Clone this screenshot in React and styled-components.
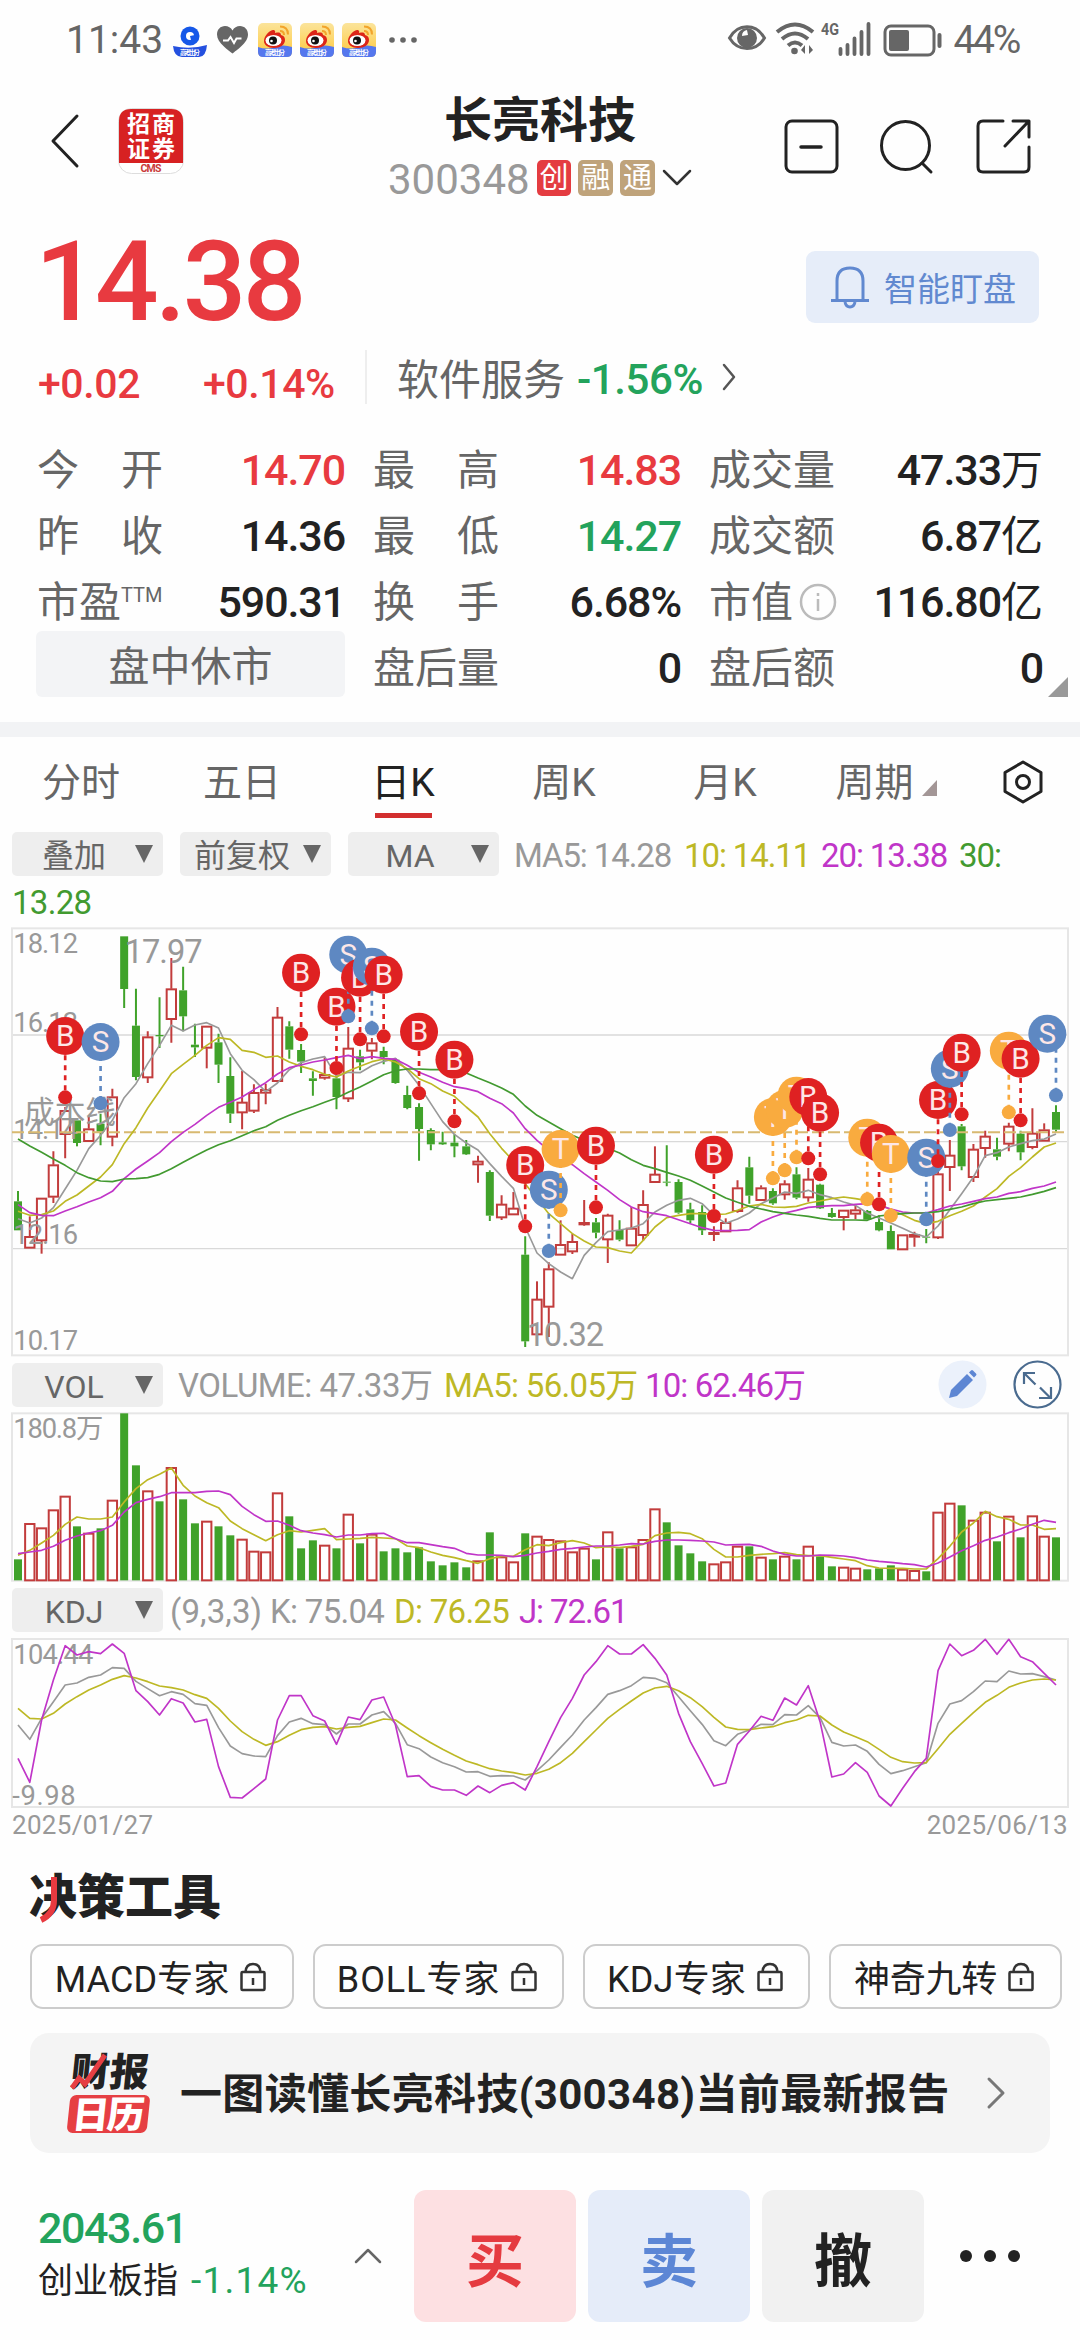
import React from 'react';
import styled, { createGlobalStyle } from 'styled-components';

const GlobalStyle = createGlobalStyle`
    * {
        box-sizing: border-box;
    }
    body {
        margin: 0;
        background: #fefefe;
        font-family: Roboto, "Noto Sans CJK SC", sans-serif;
        color: #222;
    }
    svg {
        display: block;
        flex: none;
        overflow: visible;
    }
`;

const colors = {
    red: '#e83a40',
    green: '#23a35c',
    dark: '#222222',
    gray: '#999999',
    yellow: '#bdb825',
    magenta: '#c035c8',
    maGreen: '#429a30',
    up: '#c23c3c',
    down: '#40a22a',
};

const Page = styled.main`
    width: 1080px;
    height: 2340px;
    overflow: hidden;
    background: #fefefe;
`;

/* status bar */
const StatusBar = styled.header`
    display: flex;
    align-items: center;
    justify-content: space-between;
    height: 80px;
    padding: 0 61px 0 66px;
    color: #666;
`;
const StatusGroup = styled.div`
    display: flex;
    align-items: center;
    gap: ${p => p.$gap}px;
`;
const StatusText = styled.span`
    font-size: 39px;
    line-height: 50px;
    letter-spacing: ${p => p.$spacing || 0}px;
`;

/* title bar */
const TitleBar = styled.nav`
    display: grid;
    grid-template-columns: 388px 304px 1fr;
    height: 134px;
`;
const TitleLeft = styled.div`
    display: flex;
    align-items: center;
    gap: 36px;
    padding: 0 0 13px 50px;
`;
const TitleCenter = styled.div`
    display: flex;
    flex-direction: column;
    align-items: center;
    padding-top: 14px;
`;
const StockName = styled.h1`
    margin: 0;
    font-size: 48px;
    line-height: 54px;
    font-weight: 700;
`;
const CodeRow = styled.div`
    display: flex;
    align-items: center;
    gap: 7px;
    height: 60px;
    width: 100%;
`;
const Code = styled.span`
    width: 142px;
    font-size: 42px;
    line-height: 60px;
    padding-top: 4px;
    color: #999;
`;
const Tag = styled.span`
    width: 36px;
    height: 36px;
    border-radius: 5px;
    background: ${p => p.$bg};
    color: white;
    font-size: 29px;
    line-height: 37px;
    text-align: center;
`;
const TitleRight = styled.div`
    display: flex;
    align-items: center;
    justify-content: flex-end;
    padding-right: 50px;
`;

/* quote */
const PriceRow = styled.section`
    display: flex;
    justify-content: space-between;
    height: 130px;
    padding: 0 41px 0 35px;
`;
const Price = styled.div`
    padding-top: 2px;
    font-size: 112px;
    font-weight: 500;
    line-height: 132px;
    letter-spacing: -3.6px;
    color: ${colors.red};
`;
const WatchButton = styled.button`
    display: flex;
    align-items: center;
    gap: 14px;
    width: 233px;
    height: 72px;
    margin-top: 37px;
    padding: 0 0 0 24px;
    border: none;
    border-radius: 9px;
    background: #e6edf9;
    color: #6189d0;
    font-family: inherit;
    font-size: 33px;
`;
const ChangeRow = styled.section`
    display: flex;
    align-items: center;
    height: 66px;
    padding-left: 38px;
    font-size: 42px;
    line-height: 66px;
`;
const Change = styled.span`
    width: ${p => p.$width}px;
    padding-top: 14px;
    font-weight: 500;
    font-size: 41px;
    letter-spacing: -0.4px;
    color: ${colors.red};
`;
const Divider = styled.i`
    width: 2px;
    height: 54px;
    margin-right: 30px;
    background: #eee;
`;
const Sector = styled.span`
    color: #666;
    padding-top: 7px;
    width: 180px;
`;
const SectorChange = styled.span`
    width: 145px;
    padding-top: 5px;
    font-weight: 500;
    letter-spacing: -0.4px;
    color: ${colors.green};
`;
const QuoteGrid = styled.section`
    position: relative;
    display: grid;
    grid-template-columns: 308px 308px 334px;
    grid-auto-rows: 66px;
    column-gap: 28px;
    margin-top: 27px;
    padding-left: 37px;
    height: 285px;
`;
const QuoteCell = styled.div`
    display: flex;
    justify-content: space-between;
    line-height: 68px;
`;
const QuoteLabel = styled.span`
    display: flex;
    justify-content: space-between;
    width: 126px;
    font-size: 42px;
    color: #666;
    white-space: nowrap;
`;
const Sup = styled.small`
    font-size: 20px;
    line-height: 52px;
    margin-right: 8px;
`;
const QuoteValue = styled.span`
    font-size: 43px;
    font-weight: 500;
    line-height: 66px;
    letter-spacing: -1.1px;
    white-space: nowrap;
    color: ${p => colors[p.$tone] || colors.dark};
`;
const Unit = styled.span`
    font-size: 42px;
    font-weight: 400;
    letter-spacing: 0;
`;
const SessionState = styled.div`
    height: 66px;
    margin: -4px 0 0 -1px;
    border-radius: 6px;
    background: #f3f4f6;
    color: #666;
    font-size: 41px;
    line-height: 72px;
    text-align: center;
`;
const CornerMark = styled.i`
    position: absolute;
    right: 12px;
    top: 240px;
    border-left: 20px solid transparent;
    border-bottom: 20px solid #999;
`;
const Band = styled.div`
    height: 15px;
    background: #f2f3f5;
`;

/* period tabs */
const Tabs = styled.nav`
    display: flex;
    align-items: center;
    height: 95px;
`;
const Tab = styled.span`
    position: relative;
    width: 161px;
    padding: 0 0 3px 1px;
    text-align: center;
    font-size: 39px;
    line-height: 92px;
    color: ${p => (p.$active ? '#222' : '#666')};

    &::after {
        content: '';
        display: ${p => (p.$active ? 'block' : 'none')};
        position: absolute;
        left: 53px;
        bottom: 14px;
        width: 57px;
        height: 5px;
        background: #d22f2f;
    }
`;
const PeriodMark = styled.i`
    display: inline-block;
    margin-left: 8px;
    border-left: 15px solid transparent;
    border-bottom: 16px solid #a39696;
`;
const TabIcon = styled.div`
    margin: 0 0 6px 36px;
`;

/* indicator bars */
const IndicatorBar = styled.div`
    display: flex;
    align-items: center;
    height: ${p => p.$height}px;
    padding-left: ${p => p.$left || 12}px;
`;
const Picker = styled.div`
    display: flex;
    align-items: center;
    width: 151px;
    height: 44px;
    margin-right: 17px;
    border-radius: 5px;
    background: #eee;
    color: #666;
    font-size: 32px;
    line-height: 44px;
`;
const PickerText = styled.span`
    width: 124px;
    padding-top: 4px;
    text-align: center;
    white-space: nowrap;
`;
const PickerArrow = styled.i`
    margin-left: -1px;
    border: 9px solid transparent;
    border-top: 18px solid #666;
    border-bottom: none;
`;
const Metric = styled.span`
    width: ${p => p.$width}px;
    margin-left: ${p => p.$shift || 0}px;
    padding-top: 3px;
    font-size: 33px;
    line-height: 44px;
    letter-spacing: ${p => p.$spacing || -0.7}px;
    white-space: nowrap;
    color: ${p => p.$color};
`;
const ToolIcons = styled.div`
    display: flex;
    gap: 26px;
    margin: 0 18px 0 auto;
`;
const ChartBox = styled.div`
    margin: 0 11px;
    height: ${p => p.$height}px;

    text {
        font-family: Roboto, "Noto Sans CJK SC", sans-serif;
    }
`;
const DateRow = styled.div`
    display: flex;
    justify-content: space-between;
    height: 32px;
    padding: 0 12px;
    color: #999;
    font-size: 26px;
    line-height: 34px;
    letter-spacing: 0.3px;
`;

/* tools */
const ToolTitle = styled.h2`
    position: relative;
    width: 192px;
    margin: 26px 0 0 29px;
    font-size: 48px;
    font-weight: 900;
    line-height: 64px;
    white-space: nowrap;
`;
const TitleStroke = styled.svg`
    position: absolute;
    left: 10px;
    top: 10px;
`;
const ExpertRow = styled.div`
    display: flex;
    gap: 19px;
    margin: 14px 0 24px 30px;
`;
const Expert = styled.span`
    display: flex;
    align-items: center;
    justify-content: center;
    gap: 11px;
    flex: none;
    width: ${p => p.$width}px;
    height: 65px;
    padding-right: 3px;
    border: 2px solid #ccc;
    border-radius: 13px;
    white-space: nowrap;
`;
const ExpertName = styled.span`
    padding-top: 6px;
    font-size: 36px;
    line-height: 56px;
    letter-spacing: ${p => p.$spacing}px;
`;
const ReportCard = styled.section`
    display: flex;
    align-items: center;
    width: 1020px;
    height: 120px;
    margin-left: 30px;
    padding-left: 36px;
    border-radius: 19px;
    background: #f4f4f4;
`;
const ReportText = styled.span`
    width: 806px;
    margin-left: 28px;
    padding-top: 4px;
    font-size: 42px;
    font-weight: 700;
    line-height: 60px;
    letter-spacing: 0.34px;
    white-space: nowrap;
`;

/* trade bar */
const TradeBar = styled.footer`
    display: flex;
    align-items: center;
    height: 132px;
    margin-top: 37px;
    padding-left: 38px;
`;
const IndexInfo = styled.div`
    width: 316px;
`;
const IndexValue = styled.div`
    margin-top: -3px;
    font-size: 43px;
    font-weight: 500;
    line-height: 52px;
    letter-spacing: -1.4px;
    color: ${colors.green};
`;
const IndexName = styled.div`
    padding-top: 2px;
    font-size: 35px;
    line-height: 50px;
    white-space: nowrap;
`;
const IndexChange = styled.span`
    margin-left: 13px;
    color: ${colors.green};
    font-size: 37px;
    letter-spacing: 1.2px;
`;
const TradeButtons = styled.div`
    display: flex;
    gap: 12px;
    margin: 0 35px 0 32px;
`;
const TradeButton = styled.button`
    width: 162px;
    height: 132px;
    padding: 2px 0 0;
    border: none;
    border-radius: 12px;
    background: ${p => p.$bg};
    color: ${p => p.$color};
    font-family: inherit;
    font-size: 58px;
    font-weight: 700;
`;

// Chart tables are in chart units: three to a pixel, top of the price area at 23.
const STEP = 35.386;
const xAt = i => 54 + i * STEP;

// [direction, high, body top, body bottom, low]
const candles = [
    ['d', 812, 843, 930, 930], ['u', 888, 948, 984, 984], ['u', 833, 833, 962, 1000], ['u', 693, 733, 831, 848],
    ['u', 560, 570, 643, 714], ['d', 600, 600, 668, 678], ['u', 590, 625, 664, 664], ['d', 580, 610, 634, 675],
    ['u', 505, 529, 651, 678], ['d', 48, 48, 206, 263], ['d', 205, 316, 470, 480], ['u', 333, 349, 473, 488],
    ['d', 231, 344, 348, 383], ['u', 113, 205, 298, 367], ['d', 139, 210, 288, 333], ['d', 310, 373, 381, 410],
    ['u', 317, 317, 384, 444], ['d', 340, 366, 433, 488], ['d', 411, 467, 580, 608], ['u', 452, 545, 578, 627],
    ['u', 492, 516, 573, 578], ['u', 490, 507, 519, 552], ['u', 260, 290, 484, 486], ['d', 303, 318, 388, 415],
    ['d', 371, 389, 424, 458], ['d', 453, 474, 482, 526], ['u', 412, 462, 474, 478], ['d', 470, 474, 530, 567],
    ['u', 320, 383, 536, 545], ['d', 388, 408, 426, 450], ['u', 353, 367, 393, 417], ['d', 379, 392, 410, 432],
    ['d', 414, 418, 488, 490], ['d', 496, 524, 563, 567], ['d', 549, 560, 626, 721], ['d', 624, 629, 672, 690],
    ['d', 634, 666, 672, 674], ['d', 642, 667, 678, 711], ['d', 659, 678, 702, 704], ['u', 706, 722, 734, 787],
    ['d', 750, 755, 886, 902], ['u', 825, 851, 893, 899], ['u', 815, 863, 884, 884], ['d', 948, 1003, 1263, 1280],
    ['u', 1083, 1136, 1244, 1244], ['u', 1026, 1045, 1161, 1250], ['u', 900, 972, 1005, 1005], ['u', 940, 963, 995, 1001],
    ['u', 839, 906, 914, 916], ['d', 893, 906, 937, 954], ['u', 880, 884, 959, 1028], ['d', 900, 929, 958, 963],
    ['u', 860, 923, 977, 977], ['u', 810, 852, 946, 962], ['u', 678, 761, 787, 787], ['d', 675, 784, 787, 798],
    ['d', 777, 785, 877, 880], ['d', 847, 867, 900, 908], ['d', 855, 875, 930, 944], ['u', 918, 936, 943, 962],
    ['u', 894, 906, 935, 935], ['u', 780, 802, 874, 877], ['d', 709, 741, 826, 850], ['u', 795, 802, 841, 841],
    ['d', 804, 812, 849, 853], ['u', 780, 790, 824, 838], ['d', 741, 762, 832, 837], ['u', 743, 776, 833, 844],
    ['d', 790, 793, 864, 866], ['d', 863, 878, 890, 892], ['u', 869, 869, 892, 930], ['u', 857, 868, 882, 897],
    ['d', 869, 872, 898, 898], ['d', 885, 905, 930, 933], ['d', 915, 932, 987, 987], ['u', 943, 943, 989, 989],
    ['u', 934, 942, 951, 979], ['d', 926, 949, 952, 969], ['u', 735, 760, 953, 956], ['u', 659, 704, 742, 812],
    ['d', 611, 618, 738, 750], ['u', 671, 686, 772, 785], ['u', 631, 647, 685, 712], ['d', 652, 687, 709, 720],
    ['u', 607, 617, 672, 693], ['d', 631, 640, 696, 720], ['u', 564, 638, 682, 687], ['u', 609, 628, 663, 663],
    ['d', 555, 575, 628, 634],
];

const priceLines = [
    ['#999', [895, 908, 893, 862, 806, 750, 685, 645, 600, 532, 490, 430, 375, 315, 332, 314, 307, 323, 400, 450, 478, 514, 488, 448, 427, 416, 409, 468, 456, 457, 436, 423, 414, 450, 495, 550, 604, 642, 668, 689, 730, 768, 804, 920, 998, 1030, 1055, 1075, 1005, 967, 934, 929, 923, 910, 875, 855, 840, 834, 850, 885, 909, 896, 878, 850, 833, 815, 819, 810, 823, 832, 845, 855, 878, 893, 908, 924, 940, 950, 917, 868, 820, 770, 706, 697, 680, 670, 661, 656, 641]],
    [colors.yellow, [873, 885, 883, 872, 843, 824, 797, 770, 733, 670, 622, 563, 512, 460, 432, 405, 375, 352, 357, 390, 396, 411, 407, 425, 438, 448, 462, 470, 452, 438, 424, 416, 425, 445, 475, 490, 512, 528, 560, 590, 640, 684, 722, 790, 835, 880, 910, 940, 962, 980, 982, 992, 998, 960, 920, 892, 885, 880, 880, 883, 881, 870, 857, 852, 860, 861, 858, 848, 842, 835, 830, 835, 841, 852, 868, 883, 900, 910, 903, 886, 873, 857, 830, 805, 768, 742, 710, 680, 668]],
    [colors.magenta, [853, 877, 885, 886, 872, 859, 845, 832, 813, 775, 746, 722, 697, 664, 636, 612, 585, 561, 546, 530, 508, 487, 461, 442, 434, 425, 419, 412, 405, 415, 409, 414, 417, 435, 456, 470, 486, 499, 505, 514, 534, 550, 578, 625, 660, 690, 712, 733, 760, 785, 810, 838, 860, 874, 880, 886, 898, 910, 922, 930, 931, 930, 928, 905, 890, 878, 870, 861, 858, 856, 856, 852, 850, 855, 866, 875, 878, 878, 868, 857, 851, 843, 835, 830, 819, 814, 804, 797, 785]],
    [colors.maGreen, [656, 677, 696, 716, 735, 757, 772, 782, 784, 776, 775, 772, 762, 745, 726, 707, 689, 673, 661, 646, 631, 619, 600, 585, 571, 559, 546, 533, 516, 500, 482, 463, 451, 446, 446, 448, 448, 452, 458, 473, 487, 503, 522, 557, 585, 605, 625, 645, 660, 672, 684, 698, 718, 735, 745, 756, 767, 780, 797, 815, 833, 846, 858, 866, 874, 879, 884, 888, 894, 899, 899, 899, 900, 887, 883, 880, 878, 878, 874, 867, 860, 850, 842, 838, 834, 830, 822, 813, 802]],
];

// [side, candle index, badge y, dot y, badge x shift]
const trades = [
    ['B', 4, 347, 531], ['S', 7, 365, 549], ['B', 24, 157, 342], ['B', 27, 259, 443], ['S', 28, 103, 288],
    ['B', 29, 172, 357], ['S', 30, 139, 324], ['B', 31, 163, 348], ['B', 34, 334, 519], ['B', 37, 418, 603],
    ['B', 43, 734, 918], ['S', 45, 808, 992], ['T', 46, 686, 870], ['B', 49, 676, 861], ['B', 59, 703, 887],
    ['T', 64, 590, 774], ['T', 65, 566, 750], ['T', 66, 526, 711], ['B', 67, 530, 714], ['B', 68, 577, 762],
    ['T', 72, 652, 837], ['B', 73, 667, 852], ['T', 74, 701, 886], ['S', 77, 712, 897], ['B', 78, 539, 722],
    ['S', 79, 445, 629], ['B', 80, 397, 582], ['T', 84, 391, 576], ['B', 85, 415, 600], ['S', 88, 340, 525, -26],
];
const tradeColors = { B: '#df2122', S: '#5e88c2', T: '#f9ab3f' };

const volumes = [627, 520, 533, 479, 438, 528, 549, 534, 450, 189, 345, 422, 453, 352, 447, 519, 513, 528, 555, 567, 603, 605, 428, 498, 594, 570, 585, 594, 492, 579, 552, 603, 594, 606, 591, 633, 645, 636, 651, 632, 546, 620, 635, 549, 558, 568, 572, 605, 594, 627, 545, 594, 590, 568, 476, 516, 585, 609, 633, 641, 635, 588, 588, 621, 627, 618, 627, 588, 618, 648, 651, 654, 657, 654, 645, 657, 661, 663, 486, 459, 465, 510, 486, 573, 498, 561, 497, 558, 561];
const volumeLines = [
    [colors.yellow, [615, 600, 578, 555, 522, 500, 506, 506, 500, 455, 415, 388, 372, 353, 405, 437, 457, 472, 512, 535, 553, 571, 553, 541, 545, 540, 535, 568, 566, 564, 561, 563, 565, 587, 592, 605, 615, 622, 631, 639, 625, 618, 618, 598, 583, 586, 577, 571, 578, 592, 589, 592, 588, 582, 556, 548, 546, 550, 565, 597, 620, 620, 615, 612, 610, 607, 613, 616, 616, 621, 626, 631, 646, 653, 654, 654, 656, 656, 625, 588, 545, 518, 483, 499, 507, 524, 524, 537, 535]],
    [colors.magenta, [610, 605, 600, 588, 570, 557, 548, 541, 525, 485, 457, 447, 439, 427, 427, 427, 423, 422, 433, 468, 493, 513, 512, 525, 541, 548, 553, 560, 554, 554, 550, 549, 565, 577, 577, 583, 589, 594, 609, 614, 614, 615, 619, 615, 608, 603, 597, 594, 590, 587, 587, 584, 580, 581, 573, 569, 569, 570, 572, 575, 584, 583, 582, 588, 602, 612, 617, 617, 614, 615, 617, 622, 629, 633, 636, 640, 643, 650, 638, 620, 601, 586, 570, 560, 547, 536, 522, 510, 516]],
];

const kdjLines = [
    ['#999', [1125, 1168, 1105, 1055, 1005, 999, 982, 975, 953, 955, 994, 1016, 1037, 1025, 1033, 1061, 1066, 1133, 1188, 1211, 1218, 1220, 1157, 1116, 1105, 1121, 1124, 1152, 1122, 1122, 1095, 1085, 1120, 1184, 1196, 1221, 1238, 1250, 1266, 1265, 1279, 1277, 1278, 1290, 1262, 1230, 1192, 1155, 1110, 1073, 1033, 1022, 1007, 982, 985, 998, 1040, 1082, 1123, 1172, 1187, 1153, 1140, 1123, 1124, 1094, 1095, 1067, 1103, 1177, 1188, 1185, 1204, 1243, 1271, 1262, 1250, 1238, 1120, 1062, 1052, 1025, 993, 995, 963, 972, 971, 980, 990]],
    [colors.yellow, [1075, 1105, 1107, 1090, 1062, 1040, 1020, 1005, 988, 977, 984, 995, 1008, 1013, 1020, 1034, 1045, 1075, 1113, 1145, 1168, 1186, 1175, 1156, 1139, 1132, 1130, 1137, 1132, 1129, 1118, 1107, 1110, 1134, 1157, 1178, 1198, 1216, 1233, 1244, 1256, 1263, 1268, 1275, 1270, 1258, 1238, 1210, 1175, 1140, 1105, 1078, 1053, 1029, 1014, 1009, 1022, 1043, 1070, 1102, 1131, 1138, 1139, 1134, 1130, 1118, 1110, 1096, 1098, 1125, 1146, 1160, 1175, 1198, 1222, 1235, 1239, 1238, 1196, 1153, 1120, 1088, 1057, 1036, 1012, 999, 990, 987, 990]],
    [colors.magenta, [1225, 1297, 1110, 990, 887, 915, 905, 911, 882, 910, 1022, 1055, 1095, 1046, 1059, 1116, 1108, 1250, 1342, 1344, 1316, 1287, 1110, 1037, 1037, 1097, 1113, 1183, 1101, 1109, 1050, 1041, 1125, 1280, 1277, 1309, 1320, 1320, 1336, 1308, 1328, 1306, 1298, 1320, 1250, 1175, 1103, 1045, 975, 935, 887, 912, 912, 884, 925, 975, 1090, 1175, 1240, 1308, 1299, 1183, 1143, 1099, 1111, 1044, 1065, 1007, 1115, 1281, 1272, 1238, 1267, 1338, 1368, 1315, 1265, 1225, 962, 882, 917, 901, 868, 913, 868, 920, 935, 970, 1005]],
];

const Lines = ({ items }) => items.map(([color, ys]) => (
    <polyline
        key={color}
        points={ys.map((y, i) => `${xAt(i).toFixed(1)},${y}`).join(' ')}
        fill="none"
        stroke={color}
        strokeWidth="5"
        strokeLinejoin="round"
    />
));

const Candle = ({ data: [side, high, top, bottom, low], x }) => {
    const color = side === 'u' ? colors.up : colors.down;
    return (
        <g stroke={color} strokeWidth="6">
            <path d={`M${x} ${high}V${top}M${x} ${bottom}V${low}`} />
            {side === 'u'
                ? <rect x={x - 14} y={top + 2} width="28" height={Math.max(bottom - top - 4, 3)} fill="none" />
                : <rect x={x - 12} y={top} width="24" height={bottom - top} fill={color} stroke="none" />}
        </g>
    );
};

const Trade = ({ data: [side, index, y, dotY, shift = 0] }) => {
    const x = xAt(index);
    const color = tradeColors[side];
    return (
        <g>
            <circle cx={x + shift} cy={y} r="57" fill={color} />
            <text x={x + shift} y={y + 31} fontSize="89" fill="#fde7e7" textAnchor="middle">{side}</text>
            <path d={`M${x} ${y + (side === 'B' ? 58 : 42)}V${dotY}`} stroke={color} strokeWidth="8" strokeDasharray="15 15" />
            <circle cx={x} cy={dotY} r="21" fill={color} />
        </g>
    );
};

const PriceChart = () => (
    <svg width="1058" height="430" viewBox="33 20 3174 1290">
        <path d="M36 344H3204M36 664H3204M36 985H3204" stroke="#d9d9d9" strokeWidth="4" />
        <rect x="36" y="24" width="3168" height="1281" fill="none" stroke="#e6e6e6" strokeWidth="6" />
        {candles.map((c, i) => <Candle key={i} data={c} x={xAt(i)} />)}
        <g fill="#999" fontSize="82">
            <text x="40" y="98" textLength="194">18.12</text>
            <text x="40" y="336" textLength="194">16.13</text>
            <text x="40" y="655" textLength="194">14.14</text>
            <text x="40" y="971" textLength="194">12.16</text>
            <text x="40" y="1290" textLength="194">10.17</text>
            <text x="374" y="128" fontSize="98" textLength="234">17.97</text>
            <text x="1580" y="1276" fontSize="98" textLength="232">10.32</text>
            <text x="72" y="607" fontSize="92">成本线</text>
        </g>
        <path d="M36 636H3192" stroke="#d8b970" strokeWidth="6" strokeDasharray="36 12" />
        <Lines items={priceLines} />
        {trades.map(t => <Trade key={t[1]} data={t} />)}
    </svg>
);

const VolumeChart = () => (
    <svg width="1058" height="170" viewBox="33 185 3174 510">
        <rect x="36" y="189" width="3168" height="502" fill="none" stroke="#e6e6e6" strokeWidth="6" />
        <text x="40" y="264" fontSize="82" fill="#999" textLength="270">180.8万</text>
        {volumes.map((top, i) => (candles[i][0] === 'u'
            ? <rect key={i} x={xAt(i) - 14} y={top + 1} width="28" height={689 - top} fill="#fff" stroke={colors.up} strokeWidth="6" />
            : <rect key={i} x={xAt(i) - 12} y={top} width="24" height={690 - top} fill={colors.down} />
        ))}
        <Lines items={volumeLines} />
    </svg>
);

const KdjChart = () => (
    <svg width="1058" height="170" viewBox="33 864 3174 510">
        <rect x="36" y="867" width="3168" height="504" fill="none" stroke="#e6e6e6" strokeWidth="6" />
        <text x="40" y="941" fontSize="82" fill="#999" textLength="240">104.44</text>
        <text x="37" y="1364" fontSize="82" fill="#999" textLength="190">-9.98</text>
        <Lines items={kdjLines} />
    </svg>
);

/* icons */
const Chevron = ({ d, w, h, color = '#333', stroke = 2.5 }) => (
    <svg width={w} height={h} fill="none" stroke={color} strokeWidth={stroke} strokeLinecap="round" strokeLinejoin="round">
        <path d={d} />
    </svg>
);

const BrowserBadge = () => (
    <svg width="34" height="34">
        <circle cx="17" cy="13" r="9.5" fill="#1658e8" />
        <circle cx="17" cy="13" r="4" fill="#fff" />
        <path d="M17 13l5-1v5h-4z" fill="#1658e8" />
        <path d="M0 23q17 4 34 -1q-1 12 -8 12H9Q1 34 0 23z" fill="#2450df" />
        <text x="17" y="31.5" fontSize="6.5" fontWeight="700" fill="#fff" textAnchor="middle" textLength="20">高考出分</text>
    </svg>
);

const HeartIcon = () => (
    <svg width="31" height="28" viewBox="0 0 31 28">
        <path d="M15.5 27.5C12 24.5 0 17 0 8.500C0 3.500 3.500 0 8 0c3.200 0 6 1.600 7.500 4.500C17 1.600 19.800 0 23 0c4.500 0 8 3.500 8 8.500C31 17 19 24.500 15.500 27.500z" fill="#666" />
        <path d="M6 14.500h5l2.500-3.500 3.500 6 2.500-4.500h5" fill="none" stroke="#fff" strokeWidth="2" />
    </svg>
);

const WeiboIcon = () => (
    <svg width="34" height="34">
        <defs>
            <linearGradient id="weibo" x2="0" y2="1">
                <stop offset="0" stopColor="#fbe49b" />
                <stop offset="1" stopColor="#ffc83a" />
            </linearGradient>
        </defs>
        <rect width="34" height="34" rx="5" fill="url(#weibo)" />
        <path d="M0 24q9 3 17 0t17 0v5q0 5-5 5H5q-5 0-5-5z" fill="#5577ee" />
        <path d="M6 18c0-6 7-12 10-11 2 1 1 3 1 3s6-2 6 2c4 1 4 4 4 5 0 5-5 8-11 8S6 22 6 18z" fill="#dc2518" />
        <ellipse cx="15.500" cy="17.500" rx="8" ry="5.500" fill="#fff" />
        <circle cx="15" cy="17.500" r="4" fill="#111" />
        <circle cx="13.500" cy="18" r="1.300" fill="#fff" />
        <path d="M22 8q4 0 4 4M22 3.500q8 0 8 8" fill="none" stroke="#f2a42b" strokeWidth="2" />
        <text x="17" y="32" fontSize="6.500" fontWeight="700" fill="#fff" textAnchor="middle" textLength="20">高考出分</text>
    </svg>
);

const SignalIcons = () => (
    <svg width="216" height="44" fill="none" stroke="#666">
        <path d="M1.500 20C10 5 28 5 36.500 20C28 34 10 34 1.500 20z" strokeWidth="3" />
        <circle cx="19" cy="20" r="10" fill="#666" stroke="none" />
        <path d="M19 12a6 6 0 0 0-5 6l6-1z" fill="#fff" stroke="none" />
        <g strokeWidth="4">
            <path d="M49 14q18-15 36 0M54 21q13-11 26 0M60 27.500q7-6 14 0" />
        </g>
        <circle cx="66.500" cy="33" r="3.300" fill="#666" stroke="none" />
        <path d="M77 27v9l-4-4zM81 36v-9l4 5z" fill="#666" stroke="none" />
        <text x="93" y="17" fontSize="17" fontWeight="700" fill="#666" stroke="none" textLength="18" lengthAdjust="spacingAndGlyphs">4G</text>
        <path d="M112.500 31v5M119.500 27v9M126.500 20.500v15.500M133.500 14v22M140.500 6v30" strokeWidth="3.800" strokeLinecap="round" />
        <rect x="157" y="8" width="49" height="29" rx="6" strokeWidth="3" />
        <rect x="161" y="12" width="20" height="21" rx="2" fill="#666" stroke="none" />
        <path d="M211.500 17v11" strokeWidth="4" strokeLinecap="round" />
    </svg>
);

const BrokerLogo = () => (
    <svg width="66" height="66">
        <rect x="0.500" y="0.500" width="65" height="65" rx="13" fill="#fff" stroke="#ddd" />
        <path d="M1 55V13Q1 1 13 1h40q12 0 12 12v42z" fill="#d72122" />
        <g fill="#fff" fontSize="23" fontWeight="700" textAnchor="middle" fontFamily="Noto Sans CJK SC">
            <text x="33" y="24" textLength="48">招商</text>
            <text x="33" y="48.500" textLength="48">证券</text>
        </g>
        <text x="33" y="63.500" fontSize="10.500" fontWeight="700" fill="#c93a3a" textAnchor="middle" textLength="21">CMS</text>
    </svg>
);

const HeaderIcons = () => (
    <svg width="246" height="56" fill="none" stroke="#222" strokeWidth="3" strokeLinecap="round" strokeLinejoin="round">
        <rect x="2" y="2" width="51" height="51" rx="6" />
        <path d="M17 28h20" strokeWidth="3.500" />
        <circle cx="121.500" cy="26.500" r="24" />
        <path d="M138 44l9 9" />
        <path d="M219 2h-20q-5 0-5 5v41q0 5 5 5h41q5 0 5-5V28M229 2h16v16M244 3l-23 24" />
    </svg>
);

const BellIcon = () => (
    <svg width="40" height="42" fill="none" stroke="#6189d0" strokeWidth="3">
        <path d="M7 33V15Q7 2 20 2t13 13v18M1 34.500h38M15 36q1 5 5 5t5-5" />
    </svg>
);

const InfoIcon = () => (
    <svg width="38" height="66" fill="none" stroke="#bbb" strokeWidth="2.500">
        <circle cx="21" cy="33" r="17" />
        <path d="M21 30v12M21 24v3" />
    </svg>
);

const HexIcon = () => (
    <svg width="42" height="44" fill="none" stroke="#222" strokeWidth="3" strokeLinejoin="round">
        <path d="M21 2l18 10.500v19L21 42 3 31.500v-19z" />
        <circle cx="21" cy="22" r="6.500" />
    </svg>
);

const PencilIcon = () => (
    <svg width="49" height="49">
        <circle cx="24.500" cy="24.500" r="24" fill="#ebf1fb" />
        <path d="M11 38l2-8 16-16 6 6-16 16zM31 12.500l2-2q1-1 2 0l3 3q1 1 0 2l-2 2z" fill="#5d86d3" />
    </svg>
);

const ExpandIcon = () => (
    <svg width="49" height="49" fill="none" stroke="#4a6b8f" strokeWidth="2.200">
        <circle cx="24.500" cy="24.500" r="23" />
        <path d="M11 24V13h11M11.500 13.500l11 11M38 27v11H26M37 37.500L27 27.500" />
    </svg>
);

const LockIcon = () => (
    <svg width="26" height="30" fill="none" stroke="#333" strokeWidth="2.500">
        <rect x="1.500" y="10" width="23" height="18" rx="1" />
        <path d="M5.500 10Q6 2 13 2t7.500 8M13 16v7" />
    </svg>
);

const CalendarLogo = () => (
    <svg width="86" height="82">
        <g transform="skewX(-6)" fontWeight="900" textAnchor="middle" fontFamily="Noto Sans CJK SC">
            <text x="46" y="34" fontSize="39" fill="#222" textLength="78">财报</text>
            <rect x="9" y="43" width="80" height="38" rx="6" fill="#e63f43" />
            <text x="49" y="76" fontSize="37" fill="#fff" textLength="72">日历</text>
        </g>
        <path d="M6 36l7-10 6 6L39 3" fill="none" stroke="#e63f43" strokeWidth="5" />
    </svg>
);

const PickerBox = ({ children }) => (
    <Picker>
        <PickerText>{children}</PickerText>
        <PickerArrow />
    </Picker>
);

const quotes = [
    { label: '今开', value: '14.70', tone: 'red' },
    { label: '最高', value: '14.83', tone: 'red' },
    { label: '成交量', value: '47.33', unit: '万' },
    { label: '昨收', value: '14.36' },
    { label: '最低', value: '14.27', tone: 'green' },
    { label: '成交额', value: '6.87', unit: '亿' },
    { label: '市盈', value: '590.31', extra: <Sup>TTM</Sup> },
    { label: '换手', value: '6.68%' },
    { label: '市值', value: '116.80', unit: '亿', extra: <InfoIcon /> },
    { state: '盘中休市' },
    { label: '盘后量', value: '0' },
    { label: '盘后额', value: '0' },
];

// [name, chip width, letter spacing]
const experts = [['MACD专家', 264, 0.1], ['BOLL专家', 251, 0.9], ['KDJ专家', 227, 0.2], ['神奇九转', 233, -0.3]];

function App() {
    return (
        <Page>
            <GlobalStyle />
            <StatusBar>
                <StatusGroup $gap={10}>
                    <StatusText>11:43</StatusText>
                    <BrowserBadge />
                    <HeartIcon />
                    <StatusGroup $gap={8}>
                        <WeiboIcon />
                        <WeiboIcon />
                        <WeiboIcon />
                    </StatusGroup>
                    <svg width="40" height="8" fill="#666">
                        <circle cx="6" cy="4" r="2.800" />
                        <circle cx="17" cy="4" r="2.800" />
                        <circle cx="28" cy="4" r="2.800" />
                    </svg>
                </StatusGroup>
                <StatusGroup $gap={9}>
                    <SignalIcons />
                    <StatusText $spacing={-2.3}>44%</StatusText>
                </StatusGroup>
            </StatusBar>

            <TitleBar>
                <TitleLeft>
                    <Chevron d="M27 2L3 27L27 52" w={32} h={54} color="#222" stroke={3} />
                    <BrokerLogo />
                </TitleLeft>
                <TitleCenter>
                    <StockName>长亮科技</StockName>
                    <CodeRow>
                        <Code>300348</Code>
                        <Tag $bg="#e43c41">创</Tag>
                        <Tag $bg="#bfa37b">融</Tag>
                        <Tag $bg="#bfa37b">通</Tag>
                        <Chevron d="M2 2L15 15L28 2" w={30} h={18} />
                    </CodeRow>
                </TitleCenter>
                <TitleRight>
                    <HeaderIcons />
                </TitleRight>
            </TitleBar>

            <PriceRow>
                <Price>14.38</Price>
                <WatchButton>
                    <BellIcon />
                    智能盯盘
                </WatchButton>
            </PriceRow>
            <ChangeRow>
                <Change $width={165}>+0.02</Change>
                <Change $width={162}>+0.14%</Change>
                <Divider />
                <Sector>软件服务</Sector>
                <SectorChange>-1.56%</SectorChange>
                <Chevron d="M2 2L12 14L2 26" w={18} h={28} color="#555" />
            </ChangeRow>
            <QuoteGrid>
                {quotes.map(q => (q.state
                    ? <SessionState key={q.state}>{q.state}</SessionState>
                    : (
                        <QuoteCell key={q.label}>
                            <QuoteLabel>
                                {q.label.length === 2 && !q.extra
                                    ? [...q.label].map(ch => <span key={ch}>{ch}</span>)
                                    : q.label}
                                {q.extra}
                            </QuoteLabel>
                            <QuoteValue $tone={q.tone}>
                                {q.value}
                                {q.unit && <Unit>{q.unit}</Unit>}
                            </QuoteValue>
                        </QuoteCell>
                    )
                ))}
                <CornerMark />
            </QuoteGrid>
            <Band />

            <Tabs>
                <Tab>分时</Tab>
                <Tab>五日</Tab>
                <Tab $active>日K</Tab>
                <Tab>周K</Tab>
                <Tab>月K</Tab>
                <Tab>周期<PeriodMark /></Tab>
                <TabIcon><HexIcon /></TabIcon>
            </Tabs>

            <IndicatorBar $height={44}>
                <PickerBox>叠加</PickerBox>
                <PickerBox>前复权</PickerBox>
                <PickerBox>MA</PickerBox>
                <Metric $width={170} $shift={-2} $spacing={-1.1} $color={colors.gray}>MA5: 14.28</Metric>
                <Metric $width={137} $spacing={-1.1} $color={colors.yellow}>10: 14.11</Metric>
                <Metric $width={138} $spacing={-1.1} $color={colors.magenta}>20: 13.38</Metric>
                <Metric $spacing={-1.1} $color={colors.maGreen}>30:</Metric>
            </IndicatorBar>
            <IndicatorBar $height={51}>
                <Metric $spacing={-0.7} $color={colors.maGreen}>13.28</Metric>
            </IndicatorBar>
            <ChartBox $height={430}>
                <PriceChart />
            </ChartBox>

            <IndicatorBar $height={55}>
                <PickerBox>VOL</PickerBox>
                <Metric $width={266} $shift={-2} $spacing={-0.5} $color={colors.gray}>VOLUME: 47.33万</Metric>
                <Metric $width={201} $color={colors.yellow}>MA5: 56.05万</Metric>
                <Metric $spacing={-0.9} $color={colors.magenta}>10: 62.46万</Metric>
                <ToolIcons>
                    <PencilIcon />
                    <ExpandIcon />
                </ToolIcons>
            </IndicatorBar>
            <ChartBox $height={170}>
                <VolumeChart />
            </ChartBox>

            <IndicatorBar $height={56}>
                <PickerBox>KDJ</PickerBox>
                <Metric $width={100} $shift={-10} $spacing={0.1} $color={colors.gray}>(9,3,3)</Metric>
                <Metric $width={124} $color={colors.gray}>K: 75.04</Metric>
                <Metric $width={125} $color={colors.yellow}>D: 76.25</Metric>
                <Metric $spacing={-1.1} $color={colors.magenta}>J: 72.61</Metric>
            </IndicatorBar>
            <ChartBox $height={170}>
                <KdjChart />
            </ChartBox>
            <DateRow>
                <span>2025/01/27</span>
                <span>2025/06/13</span>
            </DateRow>

            <ToolTitle>
                决策工具
                <TitleStroke width="22" height="48" fill="none" stroke={colors.red} strokeWidth="6">
                    <path d="M15 1V24Q15 38 2 44" />
                </TitleStroke>
            </ToolTitle>
            <ExpertRow>
                {experts.map(([name, width, spacing]) => (
                    <Expert key={name} $width={width}>
                        <ExpertName $spacing={spacing}>{name}</ExpertName>
                        <LockIcon />
                    </Expert>
                ))}
            </ExpertRow>
            <ReportCard>
                <CalendarLogo />
                <ReportText>一图读懂长亮科技(300348)当前最新报告</ReportText>
                <Chevron d="M3 3L17 17L3 31" w={21} h={34} color="#777" stroke={3} />
            </ReportCard>

            <TradeBar>
                <IndexInfo>
                    <IndexValue>2043.61</IndexValue>
                    <IndexName>
                        创业板指
                        <IndexChange>-1.14%</IndexChange>
                    </IndexName>
                </IndexInfo>
                <Chevron d="M2 14L14 2L26 14" w={28} h={17} color="#666" />
                <TradeButtons>
                    <TradeButton $bg="#fde0e2" $color="#e53b40">买</TradeButton>
                    <TradeButton $bg="#e5ecf9" $color="#5c86d5">卖</TradeButton>
                    <TradeButton $bg="#f1f1f1" $color="#222">撤</TradeButton>
                </TradeButtons>
                <svg width="64" height="14" fill="#222">
                    <circle cx="7" cy="7" r="6" />
                    <circle cx="31" cy="7" r="6" />
                    <circle cx="55" cy="7" r="6" />
                </svg>
            </TradeBar>
        </Page>
    );
}

export default App;
